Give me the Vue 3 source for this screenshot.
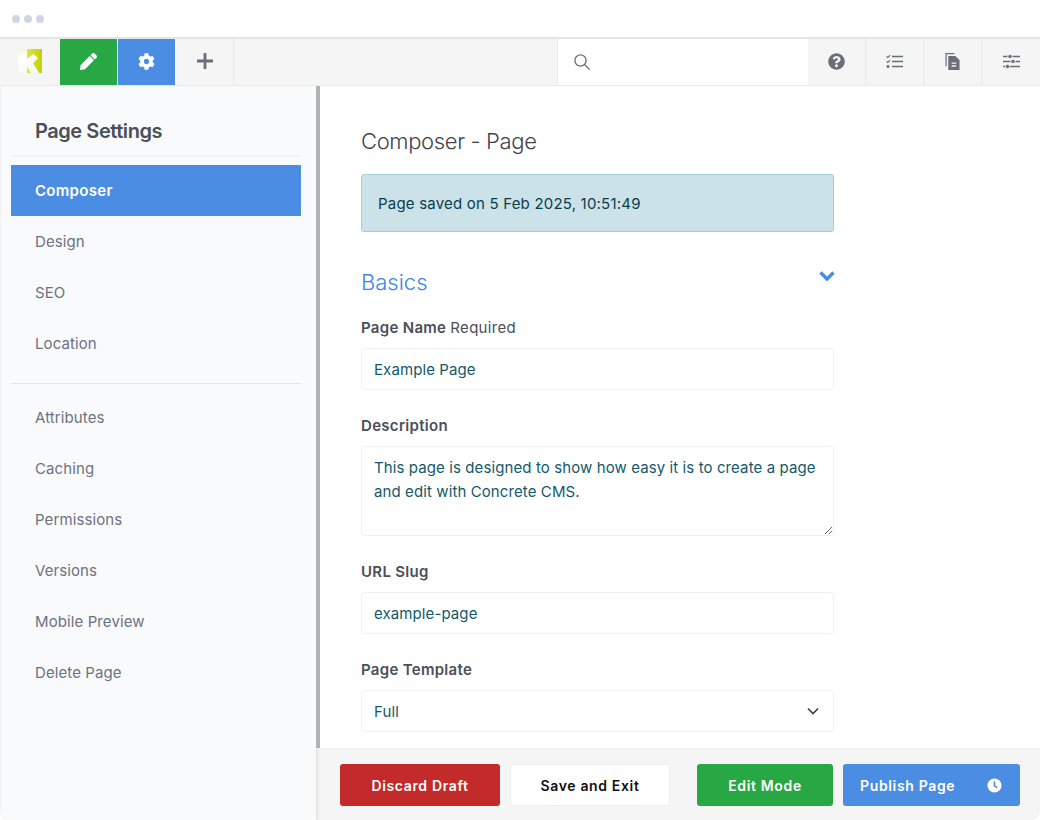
<template>
  <div class="window">
    <div class="chrome">
      <span class="dot"></span>
      <span class="dot"></span>
      <span class="dot"></span>
    </div>

    <div class="toolbar">
      <div class="cell logo-cell">
        <svg class="logo" viewBox="0 0 24 24">
          <defs>
            <linearGradient id="logoFill" x1="0" y1="0" x2="1" y2="0">
              <stop offset="0.3" stop-color="#dfe45c" />
              <stop offset="1" stop-color="#c4d000" />
            </linearGradient>
            <linearGradient id="logoMark" x1="0" y1="0" x2="0.2" y2="1">
              <stop offset="0" stop-color="#f5f6cf" />
              <stop offset="0.35" stop-color="#ffffff" />
              <stop offset="1" stop-color="#f8f8f4" />
            </linearGradient>
          </defs>
          <rect width="24" height="24" fill="url(#logoFill)" />
          <path d="M0 0H9V10L15.500 5L20 9L15 14L21 24H13L9 18V24H0Z" fill="url(#logoMark)" />
        </svg>
      </div>
      <div class="cell green">
        <svg class="icon" viewBox="0 0 512 512"><path d="M497.9 142.1l-46.1 46.1c-4.7 4.7-12.3 4.7-17 0l-111-111c-4.7-4.7-4.7-12.3 0-17l46.1-46.1c18.7-18.7 49.1-18.7 67.9 0l60.1 60.1c18.8 18.7 18.8 49.1 0 67.9zM284.2 99.8L21.6 362.4.4 483.9c-2.9 16.4 11.4 30.6 27.8 27.8l121.5-21.3 262.6-262.6c4.7-4.7 4.7-12.3 0-17l-111-111c-4.8-4.7-12.4-4.7-17.1 0z" /></svg>
      </div>
      <div class="cell blue">
        <svg class="icon" viewBox="0 0 512 512"><path d="M487.4 315.7l-42.6-24.6c4.3-23.2 4.3-47 0-70.2l42.6-24.6c4.9-2.8 7.1-8.6 5.5-14-11.1-35.6-30-67.8-54.7-94.6-3.8-4.1-10-5.1-14.8-2.3L380.8 110c-17.9-15.4-38.5-27.3-60.8-35.1V25.8c0-5.6-3.9-10.5-9.4-11.7-36.7-8.2-74.3-7.8-109.2 0-5.5 1.2-9.4 6.1-9.4 11.7V75c-22.2 7.9-42.8 19.8-60.8 35.1L88.7 85.5c-4.9-2.8-11-1.9-14.8 2.3-24.7 26.7-43.6 58.9-54.7 94.6-1.7 5.4.6 11.2 5.5 14L67.3 221c-4.3 23.2-4.3 47 0 70.2l-42.6 24.6c-4.9 2.8-7.1 8.6-5.5 14 11.1 35.6 30 67.8 54.7 94.6 3.8 4.1 10 5.1 14.8 2.3l42.6-24.6c17.9 15.4 38.5 27.3 60.8 35.1v49.2c0 5.6 3.9 10.5 9.4 11.7 36.7 8.2 74.3 7.8 109.2 0 5.5-1.2 9.4-6.1 9.4-11.7v-49.2c22.2-7.9 42.8-19.8 60.8-35.1l42.6 24.6c4.9 2.8 11 1.9 14.8-2.3 24.7-26.7 43.6-58.9 54.7-94.6 1.5-5.5-.7-11.3-5.6-14.1zM256 336c-44.1 0-80-35.9-80-80s35.9-80 80-80 80 35.9 80 80-35.9 80-80 80z" /></svg>
      </div>
      <div class="cell plain">
        <svg class="icon plus" viewBox="0 0 16 16"><path d="M6.600 0h2.800v6.600H16v2.800H9.400V16H6.600V9.400H0V6.600h6.600z" /></svg>
      </div>
      <div class="spacer"></div>
      <div class="search">
        <svg class="search-icon" viewBox="0 0 16 16"><circle cx="6.500" cy="6.500" r="5.600" /><path d="M10.600 10.600L15.600 15.600" /></svg>
      </div>
      <div class="cell plain">
        <svg class="icon dark" viewBox="0 0 512 512"><path d="M504 256c0 136.997-111.043 248-248 248S8 392.997 8 256C8 119.083 119.043 8 256 8s248 111.083 248 248zM262.655 90c-54.497 0-89.255 22.957-116.549 63.758-3.536 5.286-2.353 12.415 2.715 16.258l34.699 26.31c5.205 3.947 12.621 3.008 16.665-2.122 17.864-22.658 30.113-35.797 57.303-35.797 20.429 0 45.698 13.148 45.698 32.958 0 14.976-12.363 22.667-32.534 33.976C247.128 238.528 216 254.941 216 296v4c0 6.627 5.373 12 12 12h56c6.627 0 12-5.373 12-12v-1.333c0-28.462 83.186-29.647 83.186-106.667 0-58.002-60.165-102-116.531-102zM256 338c-25.365 0-46 20.635-46 46 0 25.364 20.635 46 46 46s46-20.636 46-46c0-25.365-20.635-46-46-46z" /></svg>
      </div>
      <div class="cell plain">
        <svg class="icon line" viewBox="0 0 17 14">
          <path d="M0.500 1.800l1.300 1.200 2.400-2.400M0.500 6.800l1.300 1.200 2.400-2.400" />
          <circle class="fill" cx="2" cy="12" r="1.500" />
          <path d="M6 2h11M6 7h11M6 12h11" class="thick" />
        </svg>
      </div>
      <div class="cell plain">
        <svg class="icon dark copy" viewBox="0 0 16 18">
          <path d="M0.500 0h9.500v1.300H1.800V14H0.500z" />
          <path d="M3.500 3h7.500l4.500 4.500V18H3.500zM7 10v1.500h5V10zM7 13v1.500h5V13z" fill-rule="evenodd" />
        </svg>
      </div>
      <div class="cell plain last">
        <svg class="icon line sliders" viewBox="0 0 17 14">
          <path d="M0 2h17M0 7h17M0 12h17" class="thick" />
          <circle class="knob" cx="7" cy="2" r="2.200" />
          <circle class="knob" cx="10" cy="7" r="2.200" />
          <circle class="knob" cx="4.500" cy="12" r="2.200" />
        </svg>
      </div>
    </div>

    <div class="body">
      <aside class="sidebar">
        <h2 class="side-title">Page Settings</h2>
        <ul class="nav">
          <li v-for="item in mainNav" :key="item" :class="{ active: item === 'Composer' }">{{ item }}</li>
        </ul>
        <div class="nav-divider"></div>
        <ul class="nav">
          <li v-for="item in moreNav" :key="item">{{ item }}</li>
        </ul>
      </aside>

      <div class="right">
        <main class="content">
          <h1 class="page-title">Composer - Page</h1>
          <div class="alert">Page saved on 5 Feb 2025, 10:51:49</div>

          <div class="section-head">
            <h3 class="section-title">Basics</h3>
            <svg class="collapse" viewBox="0 0 16 10"><path d="M1.500 1.500l6.500 6.500 6.500-6.500" /></svg>
          </div>

          <div class="field">
            <label>Page Name <span class="hint">Required</span></label>
            <input type="text" value="Example Page" />
          </div>
          <div class="field">
            <label>Description</label>
            <textarea :value="description"></textarea>
          </div>
          <div class="field">
            <label>URL Slug</label>
            <input type="text" value="example-page" />
          </div>
          <div class="field">
            <label>Page Template</label>
            <div class="select-wrap">
              <select>
                <option>Full</option>
              </select>
              <svg class="select-arrow" viewBox="0 0 12 8"><path d="M1 1.500l5 5 5-5" /></svg>
            </div>
          </div>
        </main>

        <footer class="footer">
          <button class="btn red">Discard Draft</button>
          <button class="btn white">Save and Exit</button>
          <button class="btn green-btn">Edit Mode</button>
          <button class="btn publish">
            <span>Publish Page</span>
            <svg class="clock" viewBox="0 0 16 16">
              <circle cx="8" cy="8" r="7.500" fill="#fff" />
              <path d="M8 3.600V8.400l3 1.800" fill="none" stroke="#4a8de2" stroke-width="1.700" />
            </svg>
          </button>
        </footer>
      </div>
    </div>
  </div>
</template>

<script setup>
const mainNav = ["Composer", "Design", "SEO", "Location"]
const moreNav = ["Attributes", "Caching", "Permissions", "Versions", "Mobile Preview", "Delete Page"]
const description = "This page is designed to show how easy it is to create a page and edit with Concrete CMS."
</script>

<style scoped>
.window {
  width: 1040px;
  height: 820px;
  display: flex;
  flex-direction: column;
  overflow: hidden;
  background: #fff;
  border-radius: 0 0 8px 8px;
  font-family: Inter, "Liberation Sans", sans-serif;
  color: #4b4f58;
}

.chrome {
  height: 37px;
  flex-shrink: 0;
  display: flex;
  align-items: center;
  gap: 4px;
  padding: 0 0 0 12px;
  border-bottom: 2px solid #e4e5e6;
  box-sizing: content-box;
}

.dot {
  width: 8px;
  height: 8px;
  border-radius: 50%;
  background: #cfd5e2;
}

.toolbar {
  height: 46px;
  flex-shrink: 0;
  display: flex;
  background: #f5f5f5;
  border-bottom: 1px solid #e9eaec;
}

.cell {
  width: 58px;
  box-sizing: border-box;
  flex-shrink: 0;
  display: flex;
  align-items: center;
  justify-content: center;
  border-right: 1px solid #e8e9ea;
}

.logo-cell {
  width: 60px;
  border-right: none;
}

.logo {
  width: 24px;
  height: 24px;
  margin-left: -1px;
  margin-top: -2px;
}

.green {
  background: #28a745;
  border-right: 1px solid #fff;
}

.blue {
  background: #4a8de2;
  border-right: 1px solid #f5f5f5;
}

.icon {
  width: 17px;
  height: 17px;
  fill: #fff;
  margin-top: -2px;
}

.plain .icon {
  fill: #6a6e7b;
}

.plus {
  width: 16px;
  height: 16px;
}

.plain .line {
  fill: none;
  stroke: #6a6e7b;
  stroke-width: 1.100;
}

.line .fill {
  fill: #6a6e7b;
  stroke: none;
}

.line .thick {
  stroke-width: 1.600;
}

.copy {
  width: 15px;
  height: 17px;
}

.line .knob {
  fill: #6a6e7b;
  stroke: #f5f5f5;
  stroke-width: 1;
}

.last {
  border-right: none;
}

.spacer {
  flex: 1;
}

.search {
  width: 251px;
  flex-shrink: 0;
  background: #fff;
  border-left: 1px solid #e8e9ea;
  display: flex;
  align-items: center;
  padding-left: 16px;
  box-sizing: border-box;
}

.search-icon {
  width: 16px;
  height: 16px;
  fill: none;
  stroke: #6a6e7b;
  stroke-width: 1.300;
  margin-top: -1px;
}

.body {
  flex: 1;
  min-height: 0;
  display: flex;
}

.sidebar {
  width: 316px;
  flex-shrink: 0;
  box-sizing: border-box;
  background: #f9fafc;
  border-left: 1px solid #f1f2f4;
  border-bottom-left-radius: 8px;
  padding: 0 15px 0 10px;
}

.side-title {
  margin: 0;
  padding: 31px 0 13px 24px;
  height: 71px;
  box-sizing: border-box;
  border-bottom: 2px solid #f3f4f5;
  font-size: 20px;
  line-height: 28px;
  font-weight: 600;
  color: #4b4f58;
  letter-spacing: -0.450px;
}

.nav {
  list-style: none;
  margin: 0;
  padding: 0;
}

.side-title + .nav {
  margin-top: 8px;
}

.nav li {
  height: 51px;
  line-height: 51px;
  padding-left: 24px;
  font-size: 15px;
  letter-spacing: 0.100px;
  color: #6d7280;
}

.nav li.active {
  background: #4a8de2;
  color: #fff;
  font-weight: 600;
  letter-spacing: 0.300px;
}

.nav-divider {
  margin: 14px 0 8px;
  border-top: 1px solid #e6e7e9;
}

.right {
  flex: 1;
  min-width: 0;
  display: flex;
  flex-direction: column;
}

.content {
  flex: 1;
  min-height: 0;
  overflow: hidden;
  border-left: 4px solid #aeb3b6;
  padding: 0 206px 0 41px;
}

.page-title {
  margin: 0;
  padding-top: 40px;
  font-size: 22px;
  line-height: 30px;
  font-weight: 300;
  color: #3f434b;
  letter-spacing: -0.350px;
}

.alert {
  margin-top: 18px;
  height: 58px;
  box-sizing: border-box;
  padding: 0 16px;
  display: flex;
  align-items: center;
  background: #cbe2e8;
  border: 1px solid #a3cfd9;
  border-radius: 3px;
  font-size: 15px;
  letter-spacing: 0.200px;
  color: #0c3d48;
}

.section-head {
  display: flex;
  justify-content: space-between;
  margin-top: 34px;
}

.section-title {
  margin: 0;
  font-size: 22px;
  line-height: 32px;
  font-weight: 300;
  color: #3f86e6;
}

.collapse {
  width: 16px;
  height: 10px;
  margin-top: 5px;
  margin-right: -1px;
  fill: none;
  stroke: #4a8de2;
  stroke-width: 3.400;
}

.field {
  margin-top: 26px;
}

.section-head + .field {
  margin-top: 20px;
}

.field label {
  display: block;
  font-size: 15px;
  line-height: 20px;
  font-weight: 600;
  letter-spacing: 0.300px;
  color: #4b4f58;
  margin-bottom: 10px;
}

.hint {
  font-weight: 400;
}

.field input,
.field textarea,
.field select {
  display: block;
  width: 100%;
  box-sizing: border-box;
  border: 1px solid #eff0f1;
  border-radius: 4px;
  background: #fff;
  padding: 0 12px;
  font-family: inherit;
  font-size: 15px;
  letter-spacing: 0.100px;
  color: #13596a;
  outline: none;
}

.field input,
.field select {
  height: 42px;
}

.field textarea {
  height: 90px;
  padding-top: 9px;
  padding-bottom: 9px;
  line-height: 24px;
  resize: vertical;
}

.field select {
  appearance: none;
}

.select-wrap {
  position: relative;
}

.select-arrow {
  position: absolute;
  right: 15px;
  top: 17px;
  width: 12px;
  height: 8px;
  fill: none;
  stroke: #3c3f46;
  stroke-width: 1.600;
}

.footer {
  height: 72px;
  flex-shrink: 0;
  box-sizing: border-box;
  background: #f5f5f5;
  border-top: 1px solid #f0f0f0;
  box-shadow: inset 4px 0 4px -3px rgba(0, 0, 0, 0.1);
  padding: 15px 20px 14px 24px;
  display: flex;
  align-items: stretch;
  gap: 10px;
}

.btn {
  border: 1px solid transparent;
  border-radius: 3px;
  font-family: inherit;
  font-size: 14px;
  font-weight: 600;
  letter-spacing: 0.650px;
  color: #fff;
  padding: 0;
}

.red {
  width: 160px;
  background: #c32a2a;
}

.white {
  width: 160px;
  background: #fff;
  color: #111;
  border-color: #eeeeee;
}

.green-btn {
  width: 136px;
  margin-left: 17px;
  background: #28a745;
}

.publish {
  width: 177px;
  background: #4a8de2;
  display: flex;
  align-items: center;
  justify-content: space-between;
  padding: 0 17px 0 16px;
}

.clock {
  width: 15px;
  height: 15px;
}
</style>

<style>
html,
body {
  margin: 0;
  background: #fff;
}
</style>
